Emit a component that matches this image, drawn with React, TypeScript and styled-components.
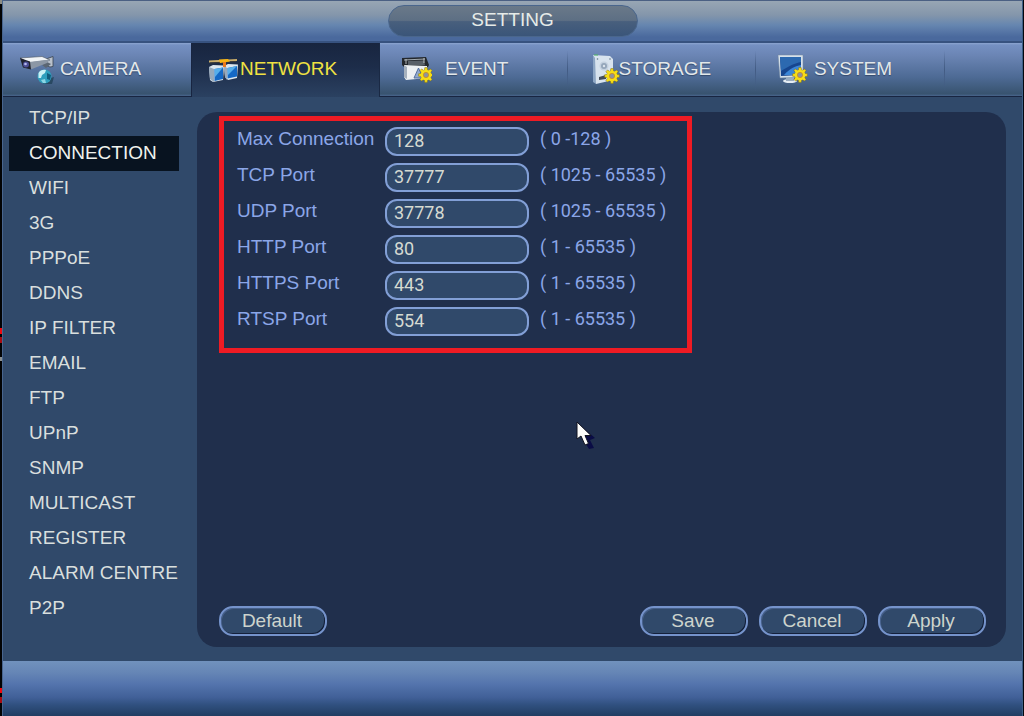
import React, { ReactNode } from "react";
import styled, { createGlobalStyle, css } from "styled-components";

const GlobalStyle = createGlobalStyle`
  *, *::before, *::after { box-sizing: border-box; }
  body {
    margin: 0;
    background: #04070d;
    font-family: "Liberation Sans", Arial, sans-serif;
    font-size: 19px;
    line-height: 22px;
    color: #dfe4e3;
  }
`;

const numeric = css`
  font-family: Roboto, "Liberation Sans", sans-serif;
  font-size: 18px;
`;

const Screen = styled.div`
  display: flex;
  min-height: 100vh;
`;

const EdgeStrip = styled.div`
  flex: 0 0 2px;
  background:
    linear-gradient(#8d8d84, #8d8d84) 0 0 / 2px 4px no-repeat,
    linear-gradient(#f00810, #f00810) 0 328px / 2px 6px no-repeat,
    linear-gradient(#a80b12, #a80b12) 0 337px / 2px 6px no-repeat,
    linear-gradient(#8a8f90, #8a8f90) 0 357px / 2px 4px no-repeat,
    linear-gradient(#f00810, #f00810) 0 688px / 2px 5px no-repeat,
    linear-gradient(#a80b12, #a80b12) 0 697px / 2px 6px no-repeat,
    #020304;
`;

const Window = styled.div`
  flex: 1;
  min-width: 0;
  display: flex;
  flex-direction: column;
  border-left: 1px solid #48658e;
  border-right: 1px solid #3d6088;
  margin-right: 1px;
  background: #30496a;
`;

const TitleBar = styled.header`
  display: flex;
  justify-content: center;
  height: 43px;
  padding-top: 4px;
  border-top: 1px solid #4b6083;
  border-bottom: 2px solid #37527f;
  background: linear-gradient(#98a6b4, #8496ab 35%, #6686b0 60%, #4a699d 90%);
`;

const Title = styled.h1`
  width: 250px;
  height: 32px;
  margin: 0;
  border: 1px solid #4a668c;
  border-radius: 16px;
  background: linear-gradient(#6a7989, #5d6f84 48%, #485f7d 52%, #3a5579);
  font-size: 19px;
  font-weight: 400;
  line-height: 28px;
  text-align: center;
  color: #e6ebe8;
`;

const Tabs = styled.nav`
  display: grid;
  grid-template-columns: repeat(5, minmax(0, 17fr)) 7fr;
  height: 54px;
  padding-left: 1px;
  border-bottom: 1px solid #182541;
  background: linear-gradient(#8ca5d0, #7590c2 4%, #6a84b3 25%, #4d6a94 65%, #38536f 96%, #49658d);
`;

const Tab = styled.button<{ $active?: boolean }>`
  display: grid;
  grid-template-columns: 48px 1fr 42px;
  align-items: center;
  height: 54px;
  padding: 0 0 2px;
  border: 0;
  border-right: 1px solid;
  border-image: linear-gradient(transparent 15%, #425b83 50%, transparent 90%) 1;
  background: transparent;
  color: #e3e8ea;
  font: inherit;
  text-shadow: 0 1px 1px #33496c;

  ${(p) =>
    p.$active &&
    css`
      border-image: none;
      border-color: #1a2944;
      background: linear-gradient(#18253f, #1d2d4a 45%, #2b4161);
      box-shadow: -1px 0 #182541;
      color: #f0e242;
      text-shadow: none;
    `}
`;

const TabIcon = styled.svg`
  width: 36px;
  height: 32px;
  margin-left: 16px;
`;

const TabLabel = styled.span`
  justify-self: center;
`;

const Body = styled.div`
  flex: 1;
  display: flex;
`;

const SideMenu = styled.ul`
  flex: 0 0 194px;
  margin: 0;
  padding: 4px 18px 0 6px;
  list-style: none;
`;

const SideLink = styled.a<{ $active?: boolean }>`
  display: block;
  height: 35px;
  padding-left: 20px;
  line-height: 34px;
  white-space: nowrap;
  color: ${(p) => (p.$active ? "#f0f2ee" : "#d9dfde")};
  background: ${(p) => (p.$active ? "#081320" : "transparent")};
  text-decoration: none;
`;

const Panel = styled.main`
  position: relative;
  flex: 1;
  display: flex;
  flex-direction: column;
  align-items: flex-start;
  margin: 15px 16px 14px 0;
  padding: 4px 20px 11px 22px;
  border-radius: 20px;
  background: #202f4c;
`;

const Highlight = styled.section`
  padding: 2px 28px 9px 13px;
  border: 5px solid #ee1b24;
`;

const Field = styled.div`
  display: grid;
  grid-template-columns: 148px 144px 130px;
  align-items: center;
  height: 36px;
`;

const FieldLabel = styled.label`
  padding-bottom: 4px;
  color: #8ba6e8;
`;

const FieldInput = styled.input`
  ${numeric}
  width: 100%;
  height: 29px;
  padding: 0 7px 1px;
  border: 2px solid #829fd6;
  border-radius: 12px;
  background: #30496a;
  color: #d5dad2;
  outline: none;
`;

const Range = styled.span`
  ${numeric}
  padding: 0 0 4px 11px;
  white-space: nowrap;
  color: #8ba6e8;
`;

const Actions = styled.footer`
  display: flex;
  gap: 11px;
  width: 100%;
  margin-top: auto;
`;

const Button = styled.button<{ $first?: boolean }>`
  width: 108px;
  height: 30px;
  margin: 0 ${(p) => (p.$first ? "auto" : "0")} 0 0;
  padding: 0 2px 1px 0;
  border: 2px solid #7593cb;
  border-radius: 14px;
  background: #30496a;
  box-shadow: inset -1px -1px #14203a, inset 1px 1px #46608a;
  color: #cdd4cd;
  font: inherit;
`;

const Pointer = styled.svg`
  position: absolute;
  left: 379px;
  top: 309px;
  width: 22px;
  height: 28px;
`;

const StatusBar = styled.div`
  height: 55px;
  background: linear-gradient(#7192bd, #6585b5 22%, #5474ad 42%, #416098 66%, #30507f 80%, #213d62);
`;

const Gear = ({ x, y }: { x: number; y: number }) => (
  <g transform={`translate(${x} ${y})`}>
    <g fill="#f6dd16" stroke="#7d6a1c" strokeWidth="0.5">
      {[0, 45, 90, 135, 180, 225, 270, 315].map((a) => (
        <path key={a} d="M-1.7-4 -1.2-7.4H1.2L1.7-4Z" transform={`rotate(${a})`} />
      ))}
    </g>
    <circle r="4" fill="#8c93a0" stroke="#f6dd16" strokeWidth="2.6" />
    <circle r="2.6" fill="none" stroke="#d08b1c" strokeWidth="0.8" />
  </g>
);

const CameraArt = () => (
  <>
    <path d="M26 6 33 3.500V13.500L30 14 25 12Z" fill="#b9c1cb" stroke="#39434f" strokeWidth="0.8" />
    <path d="M22 12 27 9 31 11 26 15Z" fill="#5b6673" />
    <path d="M0 5 22 3.500 30 7 9 10Z" fill="#f1f4f6" stroke="#4d5763" strokeWidth="0.6" />
    <path d="M9 9 30 6.500 27 10 12 16 9 15Z" fill="#8c97a5" />
    <path d="M0 5 10 8.500 11 16.500 3 14.500Z" fill="#20232e" />
    <circle cx="6" cy="11.500" r="3" fill="#4b4d94" />
    <circle cx="5.500" cy="11" r="1.300" fill="#b7b9ee" />
    <path d="M24 27 34 24 32 31 23 31Z" fill="#1c3d51" opacity="0.7" />
    <circle cx="24.500" cy="23.500" r="7" fill="#2f9fbd" />
    <path d="M18.500 20C20 17 23 16.500 26 17L25 20 22 22 21 25 18.500 25Z" fill="#c9f0f5" />
    <path d="M27 20 31 22 30 27 27 26Z" fill="#125d7c" />
    <path d="M21 27 25 26 26 30 23 30Z" fill="#8cd6e3" />
  </>
);

const NetworkArt = () => (
  <>
    <path d="M1 7.500 29 6V8L1 9.500Z" fill="#c9ad6a" />
    <path d="M2 9.500 28 8V9L2 10.500Z" fill="#3c3a36" />
    <path d="M11 6.500 20 6 22 8.500 12 10Z" fill="#f7b514" />
    <path d="M1 14 5 12 16 12.500 15 27 5 29 2 27Z" fill="#dce6ee" />
    <path d="M1 14 6 16V29L2 26Z" fill="#97a9bb" />
    <path d="M6.500 16 15 14.500V26L6.500 28Z" fill="#1468c5" />
    <path d="M6.500 16 15 14.500 7 24Z" fill="#56aeea" />
    <path d="M16 13 20 11 30 11.500 29 25 20 27 17 24Z" fill="#dce6ee" />
    <path d="M16 13 19 15V27L17 24Z" fill="#97a9bb" />
    <path d="M19.500 15 29 13V23.500L19.500 25.500Z" fill="#1468c5" />
    <path d="M19.500 15 29 13 20 22Z" fill="#56aeea" />
    <path d="M15 9H18V14H15Z" fill="#ea7a1d" />
  </>
);

const EventArt = () => (
  <>
    <path d="M6 5 30 4 33 12 32 14H8L6 12Z" fill="#23272c" />
    <path d="M8 7 29 6" stroke="#a4acb2" strokeWidth="1" />
    <path d="M12 8 28 7.500 29 12H12Z" fill="#596068" />
    <path d="M10 6V11M28 5V10" stroke="#d3d8db" strokeWidth="0.8" />
    <path d="M8 12 31 13V25L10 27 8 24Z" fill="#edf0f3" />
    <path d="M8 12 11 14V26L8 24Z" fill="#a5b0bd" />
    <path d="M18 25 22.500 15 27 25Z" fill="#91a8ce" stroke="#536f9f" strokeWidth="1" />
    <Gear x={30} y={22} />
  </>
);

const StorageArt = () => (
  <>
    <path d="M9 2 12 4 12 31 9 29Z" fill="#8da6c4" />
    <path d="M9 2 26 3 29 6V27L12 31 11 5Z" fill="#d8e3ee" />
    <circle cx="20" cy="13" r="4.500" fill="#c4d1df" />
    <circle cx="20" cy="13" r="3" fill="#94a6ba" />
    <circle cx="20" cy="13" r="1.200" fill="#dbe4ec" />
    <circle cx="13.500" cy="6" r="0.800" fill="#62768c" />
    <circle cx="26" cy="6" r="0.800" fill="#62768c" />
    <path d="M10 2H14" stroke="#51b660" strokeWidth="1" />
    <path d="M15 24 22 22V26L15 27Z" fill="#434c58" />
    <Gear x={28} y={23} />
  </>
);

const SystemArt = () => (
  <>
    <ellipse cx="18" cy="28" rx="7" ry="2" fill="#e6edf4" />
    <path d="M14 24H22V28H14Z" fill="#9aacc0" />
    <path d="M6 2H31V24L8 25Z" fill="#d6e1ea" stroke="#71869f" strokeWidth="0.5" />
    <path d="M8 4H29V22L9 23Z" fill="#17468f" />
    <path d="M8 4H29V9C23 10 17 13 9 18Z" fill="#2c69b0" />
    <path d="M12 22C18 15 24 13 29 12V22Z" fill="#3b86d8" />
    <Gear x={28} y={22} />
  </>
);

const tabs: { label: string; art: ReactNode }[] = [
  { label: "CAMERA", art: <CameraArt /> },
  { label: "NETWORK", art: <NetworkArt /> },
  { label: "EVENT", art: <EventArt /> },
  { label: "STORAGE", art: <StorageArt /> },
  { label: "SYSTEM", art: <SystemArt /> },
];

const menu = [
  "TCP/IP", "CONNECTION", "WIFI", "3G", "PPPoE", "DDNS", "IP FILTER", "EMAIL",
  "FTP", "UPnP", "SNMP", "MULTICAST", "REGISTER", "ALARM CENTRE", "P2P",
];

const fields = [
  { id: "max-connection", label: "Max Connection", value: "128", range: "( 0 -128 )" },
  { id: "tcp-port", label: "TCP Port", value: "37777", range: "( 1025 - 65535 )" },
  { id: "udp-port", label: "UDP Port", value: "37778", range: "( 1025 - 65535 )" },
  { id: "http-port", label: "HTTP Port", value: "80", range: "( 1 - 65535 )" },
  { id: "https-port", label: "HTTPS Port", value: "443", range: "( 1 - 65535 )" },
  { id: "rtsp-port", label: "RTSP Port", value: "554", range: "( 1 - 65535 )" },
];

export default function App() {
  return (
    <Screen>
      <GlobalStyle />
      <EdgeStrip />
      <Window>
        <TitleBar>
          <Title>SETTING</Title>
        </TitleBar>
        <Tabs>
          {tabs.map((t) => (
            <Tab key={t.label} type="button" $active={t.label === "NETWORK"}>
              <TabIcon viewBox="0 0 36 32" aria-hidden="true">{t.art}</TabIcon>
              <TabLabel>{t.label}</TabLabel>
            </Tab>
          ))}
        </Tabs>
        <Body>
          <SideMenu>
            {menu.map((m) => (
              <li key={m}>
                <SideLink href="#" $active={m === "CONNECTION"}>{m}</SideLink>
              </li>
            ))}
          </SideMenu>
          <Panel>
            <Highlight>
              {fields.map((f) => (
                <Field key={f.id}>
                  <FieldLabel htmlFor={f.id}>{f.label}</FieldLabel>
                  <FieldInput id={f.id} defaultValue={f.value} />
                  <Range>{f.range}</Range>
                </Field>
              ))}
            </Highlight>
            <Actions>
              <Button type="button" $first>Default</Button>
              <Button type="button">Save</Button>
              <Button type="button">Cancel</Button>
              <Button type="button">Apply</Button>
            </Actions>
            <Pointer viewBox="0 0 22 28" aria-hidden="true">
              <path d="M4 4 19 17 14 19 18 27 13 28 8 20Z" fill="#0a0c45" />
              <path d="M1 1V18L5 15 9 24 12.500 22.500 9 14.500H15Z" fill="#fdfdfb" stroke="#10131f" strokeWidth="1" />
            </Pointer>
          </Panel>
        </Body>
        <StatusBar />
      </Window>
    </Screen>
  );
}
